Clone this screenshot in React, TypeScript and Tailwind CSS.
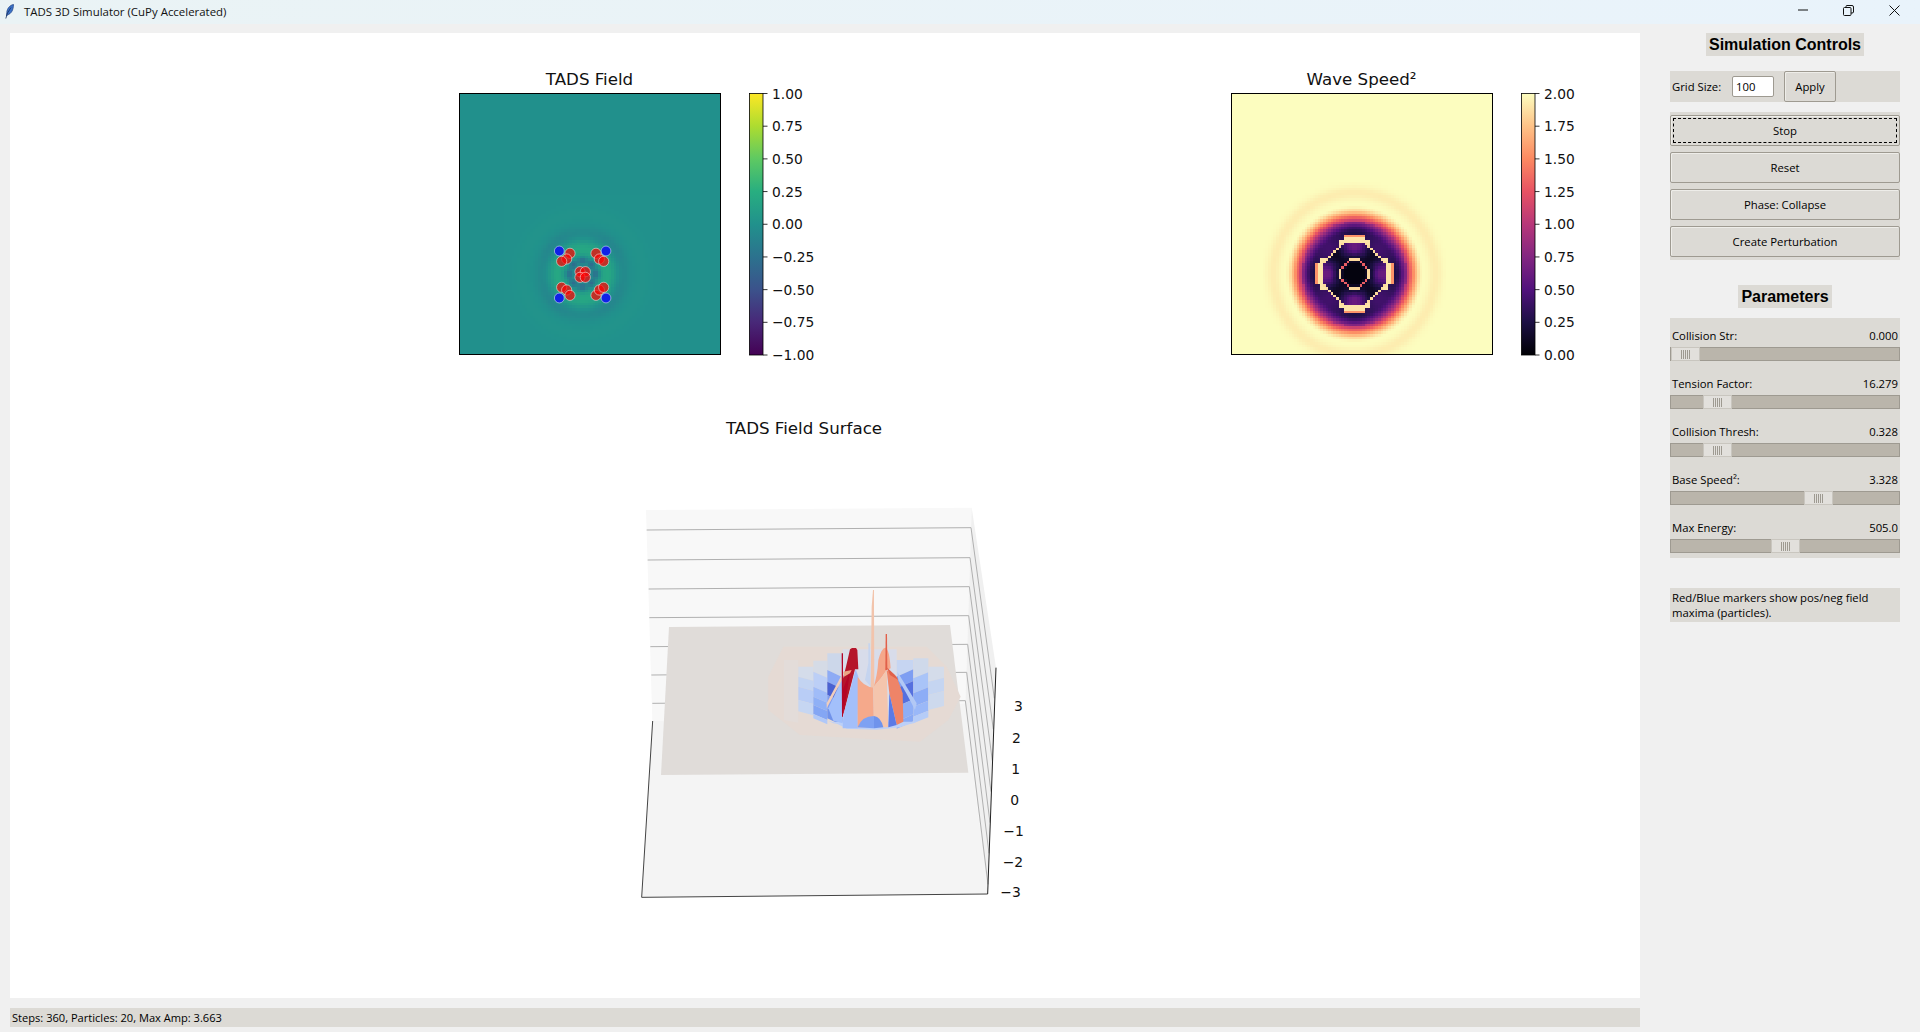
import React from 'react';

const VIRIDIS = ['#440154', '#482878', '#3b528b', '#2c728e', '#21918c', '#28ae80', '#5ec962', '#addc30', '#fde725'];
const MAGMA = ['#000004', '#1c1044', '#51127c', '#832681', '#b73779', '#e75263', '#fc8961', '#fec287', '#fcfdbf'];

const hex = (c: string) => [1, 3, 5].map((i) => parseInt(c.slice(i, i + 2), 16));

const sample = (map: string[], t: number) => {
  const p = Math.min(Math.max(t, 0), 1) * (map.length - 1);
  const i = Math.min(Math.floor(p), map.length - 2);
  const a = hex(map[i]);
  const b = hex(map[i + 1]);
  const f = p - i;
  return `rgb(${a.map((v, k) => Math.round(v + (b[k] - v) * f)).join(',')})`;
};

const gauss = (r: number, c: number, w: number) => Math.exp(-(((r - c) / w) ** 2));
const smooth = (a: number, b: number, x: number) => {
  const t = Math.min(Math.max((x - a) / (b - a), 0), 1);
  return t * t * (3 - 2 * t);
};

const fieldValue = (dx: number, dy: number) => {
  const r = Math.hypot(dx, dy);
  const th = Math.atan2(dy, dx);
  const centre = -0.3 * gauss(r, 5, 1.5) * (0.5 + 0.5 * Math.cos(4 * th) ** 2);
  return 0.19 * gauss(r, 9.5, 3.2) - 0.09 * gauss(r, 15.5, 2.6) * (0.6 + 0.4 * Math.sin(2 * th) ** 2) + 0.02 * gauss(r, 23, 3.5) + centre;
};

const speedValue = (dx: number, dy: number) => {
  const r = Math.hypot(dx, dy);
  const ax = Math.abs(dx);
  const ay = Math.abs(dy);
  const major = Math.max(ax, ay);
  const low = Math.min(ax, ay);
  const diag = (ax + ay) * 0.8;
  const oct = Math.max(major, diag);
  const th = Math.atan2(dy, dx);
  const cross = Math.cos(2 * th) ** 2;
  let v = 0.42 + 1.58 * smooth(15.5, 26.5, r);
  v -= 0.16 * cross * (r < 20 ? 1 : 0);
  v -= 0.07 * gauss(r, 31, 2.6);
  if (oct < 13) {
    v = oct < 4.5 ? 0.04 : 0.12 + 0.5 * cross * smooth(5, 10, oct);
  }
  // diagonal sides of the ring, thin and stepped
  if (Math.abs(diag - 12.7) < 0.65 && major < 13) v = Math.round(ax + ay) % 2 === 0 ? 1.85 : 1.4;
  // bowed caps on the four flat sides, with a small orange dome outside each
  const capCentre = 13.1 - low * low * 0.035;
  if (low < 6.5 && Math.abs(major - capCentre) < 0.85) v = 1.9;
  if (low < 3.8 && major - capCentre >= 0.85 && major - capCentre < 2.1) v = 1.55;
  // inner ring
  if (Math.abs(oct - 5.5) < 0.6) v = low < 2 ? 1.85 : 1.3;
  return v;
};

type HeatProps = {
  x: number;
  y: number;
  cx: number;
  cy: number;
  radius: number;
  map: string[];
  toUnit: (dx: number, dy: number) => number;
};

const CELL = 2.615;

// only the cells around the disturbance get drawn, the rest is the flat background rect
const Heat = ({ x, y, cx, cy, radius, map, toUnit }: HeatProps) => {
  const cells = [];
  for (let j = Math.max(0, cy - radius); j < Math.min(100, cy + radius); j++) {
    for (let i = Math.max(0, cx - radius); i < Math.min(100, cx + radius); i++) {
      const px = x + i * CELL;
      const py = y + j * CELL;
      cells.push(
        <rect
          key={`${i}-${j}`}
          x={px}
          y={py}
          width={CELL + 0.4}
          height={CELL + 0.4}
          fill={sample(map, toUnit(i + 0.5 - cx, j + 0.5 - cy))}
        />,
      );
    }
  }
  return <g shapeRendering="crispEdges">{cells}</g>;
};

const Colorbar = ({ id, map, x, labels }: { id: string; map: string[]; x: number; labels: string[] }) => (
  <g>
    <defs>
      <linearGradient id={id} x1="0" y1="1" x2="0" y2="0">
        {map.map((c, i) => (
          <stop key={c} offset={i / (map.length - 1)} stopColor={c} />
        ))}
      </linearGradient>
    </defs>
    <rect x={x} y={33.5} width={13.5} height={261.5} fill={`url(#${id})`} stroke="#000" strokeWidth={0.8} />
    {labels.map((label, i) => {
      const ty = 33.5 + (i * 261.5) / (labels.length - 1);
      return (
        <g key={label}>
          <line x1={x + 13.5} x2={x + 18} y1={ty} y2={ty} stroke="#000" strokeWidth={0.8} />
          <text x={x + 22.5} y={ty + 5} fontSize={13.8} fill="#111">
            {label}
          </text>
        </g>
      );
    })}
  </g>
);

const FONT_PLOT = { fontFamily: '"DejaVu Sans", sans-serif' };

const FieldPlot = () => {
  const blue = [[358, 573], [498, 573], [358, 714], [498, 714]];
  const red = [
    [390, 580], [380, 597], [365, 604], [468, 580], [478, 597], [491, 604],
    [365, 682], [380, 690], [390, 706], [468, 706], [478, 690], [491, 682],
    [420, 635], [436, 635], [420, 652], [436, 652],
  ];
  return (
    <svg width={400} height={310} style={FONT_PLOT}>
      <text x={149.5} y={24.5} textAnchor="middle" fontSize={16.67} fill="#111">
        TADS Field
      </text>
      <rect x={19.5} y={33.5} width={261} height={261} fill="#21908c" />
      <Heat x={19.5} y={33.5} cx={47} cy={69} radius={30} map={VIRIDIS} toUnit={(dx, dy) => (fieldValue(dx, dy) + 1) / 2} />
      {blue.map(([x, y]) => (
        <circle key={`b${x}${y}`} cx={x / 3} cy={y / 3} r={4.9} fill="#0f22e6" stroke="#fff" strokeOpacity={0.55} strokeWidth={0.9} />
      ))}
      {red.map(([x, y]) => (
        <circle key={`r${x}${y}`} cx={x / 3} cy={y / 3} r={5.1} fill="#f00" fillOpacity={0.7} stroke="#fff" strokeOpacity={0.55} strokeWidth={0.9} />
      ))}
      <rect x={19.5} y={33.5} width={261} height={261} fill="none" stroke="#000" strokeWidth={1} />
      <Colorbar id="viridis" map={VIRIDIS} x={309.5} labels={['1.00', '0.75', '0.50', '0.25', '0.00', '−0.25', '−0.50', '−0.75', '−1.00']} />
    </svg>
  );
};

const SpeedPlot = () => (
  <svg width={400} height={310} style={FONT_PLOT}>
    <text x={151.5} y={24.5} textAnchor="middle" fontSize={16.67} fill="#111">
      Wave Speed²
    </text>
    <rect x={21.5} y={33.5} width={261} height={261} fill="#fcfdbf" />
    <Heat x={21.5} y={33.5} cx={47} cy={69} radius={35} map={MAGMA} toUnit={(dx, dy) => speedValue(dx, dy) / 2} />
    <rect x={21.5} y={33.5} width={261} height={261} fill="none" stroke="#000" strokeWidth={1} />
    <Colorbar id="magma" map={MAGMA} x={311.5} labels={['2.00', '1.75', '1.50', '1.25', '1.00', '0.75', '0.50', '0.25', '0.00']} />
  </svg>
);

const Poly = ({ p, f }: { p: string; f: string }) => <polygon points={p} fill={f} />;

// bowl columns: x0, x1, slope of the bands across the column, bands
const bowl: [number, number, number, [number, number, string][]][] = [
  [492, 535, 8, [[510, 690, '#e3dcd9']]],
  [535, 580, 12, [[530, 560, '#d4dcea'], [560, 590, '#c3d4f2'], [590, 630, '#b9cdf6'], [630, 664, '#c6d6f2']]],
  [580, 622, 18, [[512, 545, '#d5dbe6'], [545, 590, '#bccff6'], [590, 620, '#a0bcf8'], [620, 645, '#8fb0f6'], [645, 672, '#84a6f4'], [672, 685, '#b0c8f8']]],
  [622, 668, 22, [[490, 540, '#ccd7ea'], [540, 575, '#8dabf5'], [575, 615, '#4a62d2'], [615, 655, '#7f9df0'], [655, 685, '#7092ea']]],
  [668, 830, 0, [[478, 712, '#d8dcea']]],
  [830, 880, -22, [[510, 560, '#c6d5f2'], [560, 595, '#7e9ef2'], [595, 650, '#5570df'], [650, 695, '#8eaef6'], [695, 716, '#88a9f5']]],
  [880, 925, -18, [[505, 565, '#cfd9ea'], [565, 610, '#a9c4f8'], [610, 650, '#8dadf6'], [650, 680, '#9ab8f8'], [680, 700, '#b5ccf8']]],
  [925, 972, -12, [[530, 575, '#d4dcea'], [575, 615, '#c5d5f1'], [615, 660, '#cdd9ed']]],
];

// z-axis grid: [back wall left, back wall right, right wall end]
const grid = [
  [80, 120, 1053, 113, 1123, 625],
  [83, 210, 1050, 203, 1120, 718],
  [86, 297, 1048, 290, 1117, 812],
  [88, 383, 1046, 377, 1113, 905],
  [91, 470, 1043, 463, 1110, 998],
  [94, 555, 1040, 547, 1107, 1090],
  [97, 640, 1036, 632, 1104, 1183],
];

const zLabels: [string, number, number][] = [
  ['3', 1182, 662], ['2', 1176, 758], ['1', 1174, 851], ['0', 1171, 944],
  ['−1', 1150, 1037], ['−2', 1148, 1131], ['−3', 1141, 1221],
];

const SurfacePlot = () => (
  <svg width={420} height={510} viewBox="0 0 1260 1530" style={FONT_PLOT}>
    <text x={552} y={72} textAnchor="middle" fontSize={50} fill="#111">
      TADS Field Surface
    </text>
    <g transform="translate(0 240)">
      <Poly p="78,60 1055,53 1036,640 97,693" f="#f8f8f8" />
      <Poly p="1055,53 1128,533 1103,1212 1036,640" f="#f0f0f0" />
      <Poly p="98,693 1036,640 1103,1212 65,1222" f="#f4f4f4" />
      {grid.map(([a, b, c, d, e, f]) => (
        <polyline key={b} points={`${a},${b} ${c},${d} ${e},${f}`} fill="none" stroke="#b0b0b0" strokeWidth={3} />
      ))}
      <polyline points="98,693 65,1222 1103,1212" fill="none" stroke="#444" strokeWidth={3} />
      <line x1={1128} y1={533} x2={1103} y2={1212} stroke="#222" strokeWidth={3} />
      <Poly p="147,411 990,405 1045,848 123,855" f="#e0dcd9" />
      <Poly p="490,470 920,470 980,530 1022,620 985,690 900,755 540,735 445,660 445,560" f="#e5dad4" />
      {bowl.map(([x0, x1, s, bands]) =>
        bands.map(([y0, y1, c], i) => (
          <polygon
            key={`${x0}-${y0}`}
            points={`${x0},${y0} ${x1},${i === 0 ? y0 : y0 + s} ${x1},${y1 + s} ${x0},${y1}`}
            fill={c}
          />
        )),
      )}
      <path d="M625,692 Q760,735 895,692 L880,700 Q760,722 640,700 Z" fill="#bcd0f8" />
      <Poly p="640,695 890,695 840,712 770,719 680,716" f="#bcd0f8" />
      {/* peaks, back to front */}
      <path d="M832,545 Q860,590 890,640 L885,660 Q855,600 835,570 Z" fill="#b2c8f5" />
      <Poly p="745,460 750,460 752,590 735,570 745,520" f="#c5d4ef" />
      <path d="M760,592 Q772,560 775,510 Q785,472 797,473 Q808,478 812,535 L800,540 Q785,565 760,592 Z" fill="#f5a78a" />
      <Poly p="625,655 665,570 668,700 640,692" f="#a3c0fb" />
      <Poly p="665,555 620,640 620,655 665,572" f="#f0cdbb" />
      <Poly p="668,570 678,530 690,478 696,474 708,474 712,480 715,538 705,538 670,675" f="#b5152b" />
      <Poly p="668,600 690,545 670,675" f="#b40426" />
      <Poly p="665,490 669,490 669,680 666,680" f="#b40426" />
      <Poly p="670,545 695,540 690,550 672,560" f="#eba584" />
      <path d="M707,537 L715,560 L713,715 L668,715 L670,675 Z" fill="#a3bffa" />
      <path d="M713,560 Q730,590 760,592 L762,712 L713,712 Z" fill="#f5a98b" />
      <path d="M760,592 Q785,565 800,540 L805,712 L762,712 Z" fill="#f4c5ad" />
      <Poly p="800,540 830,560 848,610 850,695 830,705 808,610" f="#ee8468" />
      <Poly p="800,532 825,555 835,570 810,555" f="#e1604a" />
      <Poly p="808,610 830,705 805,712" f="#5b7ae5" />
      <path d="M713,712 Q725,678 762,678 L762,715 Z" fill="#7ea1f3" />
      <path d="M762,678 Q782,680 790,712 L762,715 Z" fill="#6f93ec" />
      <Poly p="797,432 801,432 802,540 796,540" f="#e1604a" />
      <Poly p="759,300 762,300 762,350 763,592 752,592 755,350" f="#f2c4ac" />
      {zLabels.map(([t, x, y]) => (
        <text key={t} x={x} y={y} fontSize={41.7} fill="#111">
          {t}
        </text>
      ))}
    </g>
  </svg>
);

const btn = 'flex items-center justify-center pt-px bg-[#dcdad5] border border-[#9e9a91] rounded-[2px] shadow-[inset_1px_1px_0_#eeede9]';

const params = [
  { label: 'Collision Str:', value: '0.000', offset: 'ml-0' },
  { label: 'Tension Factor:', value: '16.279', offset: 'ml-[32px]' },
  { label: 'Collision Thresh:', value: '0.328', offset: 'ml-[32px]' },
  { label: 'Base Speed²:', value: '3.328', offset: 'ml-[133px]' },
  { label: 'Max Energy:', value: '505.0', offset: 'ml-[100px]' },
];

const Slider = ({ offset }: { offset: string }) => (
  <div className="h-[14px] bg-[#bab5ab] border border-[#9e9a91] flex items-stretch">
    <div className={`${offset} w-[29px] -my-px bg-[#e2e0dc] border border-[#c9c6bf] flex items-center justify-center gap-px`}>
      {[0, 1, 2, 3, 4].map((n) => (
        <span key={n} className="w-px h-[9px] bg-[#9e9a91]" />
      ))}
    </div>
  </div>
);

const Heading = ({ children }: { children: React.ReactNode }) => (
  <div className="flex justify-center">
    <h2 className="h-[23px] px-[3px] flex items-center bg-[#dcdad5] text-black font-bold text-base" style={{ fontFamily: '"Liberation Sans", sans-serif' }}>
      {children}
    </h2>
  </div>
);

export default function App() {
  return (
    <div className="w-[1920px] h-[1032px] overflow-hidden flex flex-col bg-[#f0f0f0] text-black text-[11.3px]" style={{ fontFamily: '"Open Sans", "Noto Sans", sans-serif' }}>
      <header className="h-6 shrink-0 flex items-center bg-gradient-to-r from-[#eaf3f5] to-[#e9f3fb]">
        <svg width="10" height="15" viewBox="0 0 10 15" className="ml-[5px] mb-[2px]">
          <path d="M8.500 0.500 C5 1 2 4.500 1.800 8.500 L1.500 12 L3 10.500 C6 10 8.500 6 8.500 0.500 Z" fill="#3c72c8" stroke="#1d3f80" strokeWidth="0.7" />
          <path d="M0.800 14.500 L2.500 9 L6 3.500" fill="none" stroke="#15305f" strokeWidth="0.8" />
        </svg>
        <span className="ml-[9px] text-[11.45px] text-[#111]">TADS 3D Simulator (CuPy Accelerated)</span>
        <div className="ml-auto flex items-center pr-5 pb-1 gap-[35px]">
          <svg width="10" height="10" viewBox="0 0 10 10"><line x1="0" x2="10" y1="5" y2="5" stroke="#111" /></svg>
          <svg width="11" height="11" viewBox="0 0 11 11" fill="none" stroke="#111">
            <rect x="0.500" y="2.500" width="7.500" height="8" rx="1" />
            <path d="M3 2.500 V1.500 Q3 0.500 4 0.500 H9 Q10.500 0.500 10.500 2 V7 Q10.500 8 9 8 H8" />
          </svg>
          <svg width="11" height="11" viewBox="0 0 11 11" stroke="#111"><path d="M0.500 0.500 L10.500 10.500 M10.500 0.500 L0.500 10.500" /></svg>
        </div>
      </header>

      <div className="flex flex-1 min-h-0">
        <div className="w-[1640px] pl-[10px] pt-[9px] shrink-0 flex flex-col">
          <main className="h-[965px] bg-white flex flex-col">
            <div className="flex pl-[430px] pt-[27px] gap-[370px]">
              <FieldPlot />
              <SpeedPlot />
            </div>
            <div className="pl-[610px] mt-[40px]">
              <SurfacePlot />
            </div>
          </main>
          <div className="mt-[10px] h-[19px] bg-[#dcdad5] flex items-center pl-[2px] pt-px text-[11.100px]">
            Steps: 360, Particles: 20, Max Amp: 3.663
          </div>
        </div>

        <aside className="w-[230px] ml-[30px] pt-[9px] flex flex-col">
          <Heading>Simulation Controls</Heading>
          <div className="mt-[15px] h-[31px] bg-[#dcdad5] flex items-center pl-[2px]">
            <span className="w-[60px] pt-px">Grid Size:</span>
            <input
              readOnly
              value="100"
              className="w-[42px] h-[21px] bg-white border border-[#9e9a91] rounded-[2px] px-[3px] text-[11.300px] outline-none"
            />
            <button className={`${btn} ml-[10px] w-[52px] h-[31px]`}>Apply</button>
          </div>
          <div className="mt-[10px] py-[3px] bg-[#dcdad5] flex flex-col gap-[6px]">
            <button className={`${btn} h-[31px] relative`}>
              <span className="absolute inset-[2px] border border-dashed border-black" />
              Stop
            </button>
            <button className={`${btn} h-[31px]`}>Reset</button>
            <button className={`${btn} h-[31px]`}>Phase: Collapse</button>
            <button className={`${btn} h-[31px]`}>Create Perturbation</button>
          </div>

          <div className="mt-[25px]">
            <Heading>Parameters</Heading>
          </div>
          <div className="mt-[10px] pt-[10px] pb-[5px] bg-[#dcdad5] flex flex-col gap-[15px]">
            {params.map((p) => (
              <div key={p.label}>
                <div className="h-[19px] pb-[3px] px-[2px] flex items-center justify-between">
                  <span>{p.label}</span>
                  <span>{p.value}</span>
                </div>
                <Slider offset={p.offset} />
              </div>
            ))}
          </div>

          <p className="mt-[30px] h-[34px] bg-[#dcdad5] px-[2px] py-[2px] leading-[15px]">
            Red/Blue markers show pos/neg field maxima (particles).
          </p>
        </aside>
      </div>
    </div>
  );
}
